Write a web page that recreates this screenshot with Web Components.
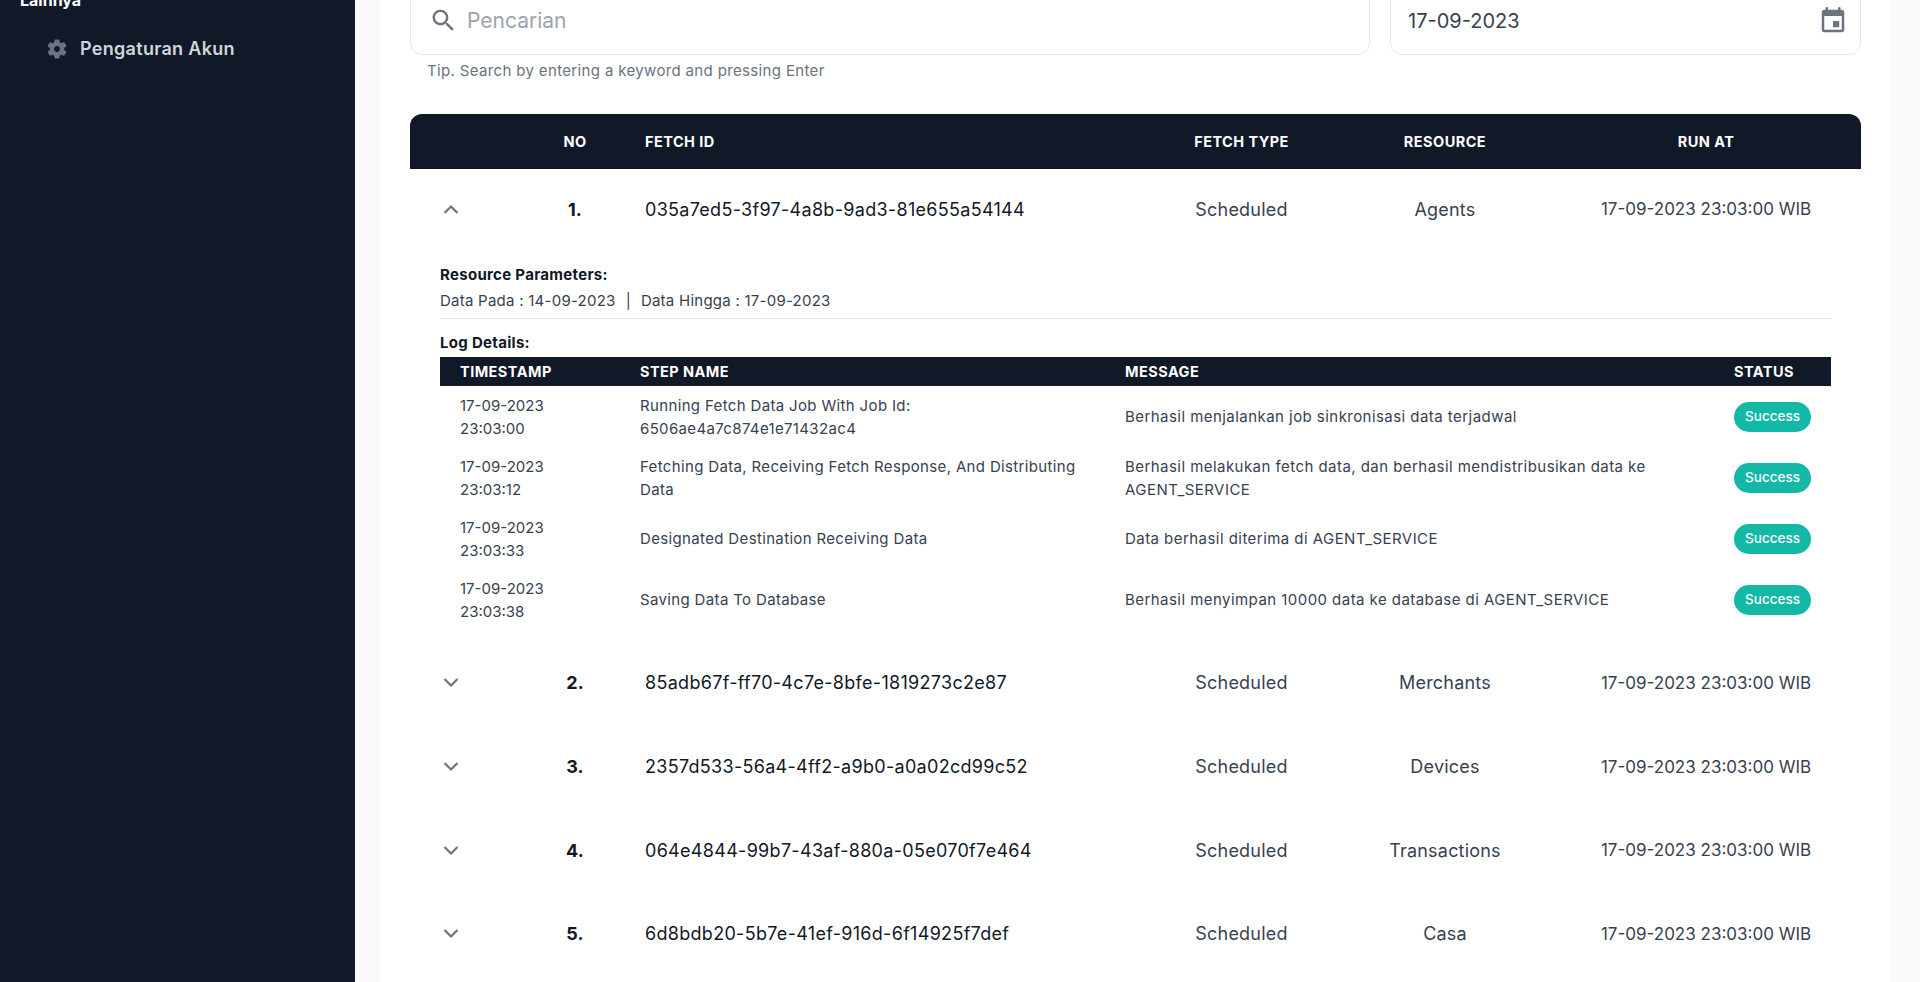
<!DOCTYPE html>
<html lang="id">
<head>
<meta charset="utf-8">
<title>Fetch Logs</title>
<style>
  html, body { margin: 0; height: 100%; overflow: hidden; background: #fafafa; }
  body { font-family: Inter, "Noto Sans", sans-serif; color: #374151; }
</style>
</head>
<body>
<app-shell>
  <side-bar slot="side">
    <nav-item>Pengaturan Akun</nav-item>
  </side-bar>
  <filter-bar></filter-bar>
  <fetch-table>
    <fetch-row no="1" fid="035a7ed5-3f97-4a8b-9ad3-81e655a54144" type="Scheduled" res="Agents" open>
      <log-row ts="17-09-2023 23:03:00" msg="Berhasil menjalankan job sinkronisasi data terjadwal">Running Fetch Data Job With Job Id:<br>6506ae4a7c874e1e71432ac4</log-row>
      <log-row ts="17-09-2023 23:03:12" msg="Berhasil melakukan fetch data, dan berhasil mendistribusikan data ke AGENT_SERVICE">Fetching Data, Receiving Fetch Response, And Distributing Data</log-row>
      <log-row ts="17-09-2023 23:03:33" msg="Data berhasil diterima di AGENT_SERVICE">Designated Destination Receiving Data</log-row>
      <log-row ts="17-09-2023 23:03:38" msg="Berhasil menyimpan 10000 data ke database di AGENT_SERVICE">Saving Data To Database</log-row>
    </fetch-row>
    <fetch-row no="2" fid="85adb67f-ff70-4c7e-8bfe-1819273c2e87" type="Scheduled" res="Merchants"></fetch-row>
    <fetch-row no="3" fid="2357d533-56a4-4ff2-a9b0-a0a02cd99c52" type="Scheduled" res="Devices"></fetch-row>
    <fetch-row no="4" fid="064e4844-99b7-43af-880a-05e070f7e464" type="Scheduled" res="Transactions"></fetch-row>
    <fetch-row no="5" fid="6d8bdb20-5b7e-41ef-916d-6f14925f7def" type="Scheduled" res="Casa"></fetch-row>
  </fetch-table>
</app-shell>

<script>
  // small helper so every element gets an open shadow root from its own template
  function shadow(el, html) {
    const template = document.createElement("template");
    template.innerHTML = html;
    el.attachShadow({ mode: "open" });
    el.shadowRoot.appendChild(template.content.cloneNode(true));
  }

  const MAIN_COLS = "95px 140px 500px 193px 214px 308px";
  const LOG_COLS = "180px 485px 609px 116px";

  class AppShell extends HTMLElement {
    constructor() {
      super();
      shadow(this, `
        <style>
          :host { display: flex; height: 982px; overflow: hidden; }
          .side { flex: 0 0 355px; }
          .panel {
            flex: 0 0 1511px; margin-left: 25px; background: #fff;
            padding: 0 30px; box-sizing: border-box;
          }
        </style>
        <div class="side"><slot name="side"></slot></div>
        <div class="panel"><slot></slot></div>
      `);
    }
  }

  class SideBar extends HTMLElement {
    constructor() {
      super();
      shadow(this, `
        <style>
          :host { display: block; height: 982px; background: #111827; padding: 0 20px; box-sizing: border-box; overflow: hidden; }
          .title { font-size: 16px; font-weight: 700; color: #fff; line-height: 20px; margin-top: -10px; }
          .items { margin-top: 27px; padding-left: 25px; }
        </style>
        <div class="title">Lainnya</div>
        <div class="items"><slot></slot></div>
      `);
    }
  }

  class NavItem extends HTMLElement {
    constructor() {
      super();
      shadow(this, `
        <style>
          :host { display: flex; align-items: center; gap: 11px; color: #d1d5db; font-size: 18px; letter-spacing: .3px; font-weight: 600; line-height: 24px; }
          svg { width: 24px; height: 24px; fill: #6b7280; flex: none; }
        </style>
        <svg viewBox="0 0 24 24"><path d="M19.14 12.94c.04-.3.06-.61.06-.94 0-.32-.02-.64-.07-.94l2.03-1.58c.18-.14.23-.41.12-.61l-1.92-3.32c-.12-.22-.37-.29-.59-.22l-2.39.96c-.5-.38-1.03-.7-1.62-.94l-.36-2.54c-.04-.24-.24-.41-.48-.41h-3.84c-.24 0-.43.17-.47.41l-.36 2.54c-.59.24-1.13.57-1.62.94l-2.39-.96c-.22-.08-.47 0-.59.22L2.74 8.87c-.12.21-.08.47.12.61l2.03 1.58c-.05.3-.09.63-.09.94s.02.64.07.94l-2.03 1.58c-.18.14-.23.41-.12.61l1.92 3.32c.12.22.37.29.59.22l2.39-.96c.5.38 1.03.7 1.62.94l.36 2.54c.05.24.24.41.48.41h3.84c.24 0 .44-.17.47-.41l.36-2.54c.59-.24 1.13-.56 1.62-.94l2.39.96c.22.08.47 0 .59-.22l1.92-3.32c.12-.22.07-.47-.12-.61l-2.01-1.58zM12 15c-1.65 0-3-1.35-3-3s1.35-3 3-3 3 1.35 3 3-1.35 3-3 3z"/></svg>
        <span><slot></slot></span>
      `);
    }
  }

  class FilterBar extends HTMLElement {
    constructor() {
      super();
      shadow(this, `
        <style>
          :host { display: block; margin-top: -14px; }
          .row { display: flex; gap: 20px; }
          .field {
            height: 69px; box-sizing: border-box; background: #fff;
            border: 1px solid #e5e7eb; border-radius: 12px;
            display: flex; align-items: center; font-size: 20px;
          }
          .search { flex: 0 0 960px; padding-left: 18px; color: #9ca3af; gap: 9px; font-size: 21px; }
          .date { flex: 1; padding: 0 12px 0 17px; justify-content: space-between; color: #374151; }
          svg { width: 29px; height: 29px; fill: #6b7280; flex: none; }
          .date svg { width: 30px; height: 30px; }
          .tip { font-size: 15px; letter-spacing: .35px; color: #6b7280; margin: 6px 0 0 17px; line-height: 20px; }
        </style>
        <div class="row">
          <div class="field search">
            <svg viewBox="0 0 24 24"><path d="M15.5 14h-.79l-.28-.27C15.41 12.59 16 11.11 16 9.5 16 5.91 13.09 3 9.5 3S3 5.91 3 9.5 5.91 16 9.5 16c1.61 0 3.09-.59 4.23-1.57l.27.28v.79l5 4.99L20.49 19l-4.99-5zm-6 0C7.01 14 5 11.99 5 9.5S7.01 5 9.5 5 14 7.01 14 9.5 11.99 14 9.5 14z"/></svg>
            <span>Pencarian</span>
          </div>
          <div class="field date">
            <span>17-09-2023</span>
            <svg viewBox="0 0 24 24"><path d="M17 12h-5v5h5v-5zM16 1v2H8V1H6v2H5c-1.11 0-1.99.9-1.99 2L3 19c0 1.1.89 2 2 2h14c1.1 0 2-.9 2-2V5c0-1.1-.9-2-2-2h-1V1h-2zm3 18H5V8h14v11z"/></svg>
          </div>
        </div>
        <div class="tip">Tip. Search by entering a keyword and pressing Enter</div>
      `);
    }
  }

  class FetchTable extends HTMLElement {
    constructor() {
      super();
      shadow(this, `
        <style>
          :host { display: block; margin-top: 33px; }
          .head {
            display: grid; grid-template-columns: ${MAIN_COLS}; align-items: center;
            height: 55px; background: #111827; color: #fff;
            border-radius: 12px 12px 0 0;
            font-size: 14.5px; letter-spacing: .45px; font-weight: 700; text-transform: uppercase;
          }
          .c { text-align: center; }
        </style>
        <div class="head">
          <span></span><span class="c">No</span><span>Fetch Id</span>
          <span class="c">Fetch Type</span><span class="c">Resource</span><span class="c">Run At</span>
        </div>
        <slot></slot>
      `);
    }
  }

  class FetchRow extends HTMLElement {
    constructor() {
      super();
      const open = this.hasAttribute("open");
      const chevron = open ? "1.5,9 8,2.5 14.5,9" : "1.5,2 8,8.5 14.5,2";
      shadow(this, `
        <style>
          :host { display: block; }
          .row {
            display: grid; grid-template-columns: ${MAIN_COLS}; align-items: center;
            height: ${open ? "80px" : "83.7px"}; font-size: 18px; letter-spacing: .2px; color: #374151;
          }
          .chev { display: flex; justify-content: center; padding-left: 1px; padding-right: 14px; }
          svg { width: 16px; height: 11px; fill: none; stroke: #6b7280; stroke-width: 2.2; }
          .no { text-align: center; font-weight: 700; color: #111827; }
          .id { color: #111827; letter-spacing: .3px; }
          .c { text-align: center; }
          .run { text-align: center; font-size: 17px; letter-spacing: 0; }
          .detail { display: ${open ? "block" : "none"}; padding: 15px 30px 11px; font-size: 15px; }
          .label { font-weight: 700; color: #111827; line-height: 22px; letter-spacing: .3px; }
          .params { line-height: 22px; margin-top: 4px; padding-bottom: 6px; border-bottom: 1px solid #e5e7eb; letter-spacing: .25px; }
          .sep { margin: 0 10px; color: #374151; }
          .logs { margin-top: 13px; }
          .log-head {
            display: grid; grid-template-columns: ${LOG_COLS}; align-items: center;
            height: 29px; margin-top: 3px; background: #111827; color: #fff;
            font-size: 14.5px; letter-spacing: .45px; font-weight: 700; text-transform: uppercase;
          }
          .log-head span { padding-left: 20px; }
        </style>
        <div class="row">
          <div class="chev"><svg viewBox="0 0 16 11"><polyline points="${chevron}"/></svg></div>
          <div class="no">${this.getAttribute("no")}.</div>
          <div class="id">${this.getAttribute("fid")}</div>
          <div class="c">${this.getAttribute("type")}</div>
          <div class="c">${this.getAttribute("res")}</div>
          <div class="run">17-09-2023 23:03:00 WIB</div>
        </div>
        <div class="detail">
          <div class="label">Resource Parameters:</div>
          <div class="params">Data Pada : 14-09-2023<span class="sep">|</span>Data Hingga : 17-09-2023</div>
          <div class="logs">
            <div class="label">Log Details:</div>
            <div class="log-head"><span>Timestamp</span><span>Step Name</span><span>Message</span><span>Status</span></div>
            <slot></slot>
          </div>
        </div>
      `);
    }
  }

  class LogRow extends HTMLElement {
    constructor() {
      super();
      shadow(this, `
        <style>
          :host { display: grid; grid-template-columns: ${LOG_COLS}; align-items: center; height: 61px; font-size: 15px; line-height: 23px; color: #374151; }
          div { padding-left: 20px; }
          .ts { padding-right: 50px; }
          .step { padding-right: 20px; letter-spacing: .35px; }
          .msg { padding-right: 50px; letter-spacing: .45px; }
        </style>
        <div class="ts">${this.getAttribute("ts")}</div>
        <div class="step"><slot></slot></div>
        <div class="msg">${this.getAttribute("msg")}</div>
        <div><status-badge>Success</status-badge></div>
      `);
    }
  }

  class StatusBadge extends HTMLElement {
    constructor() {
      super();
      shadow(this, `
        <style>
          :host {
            display: inline-flex; align-items: center; justify-content: center;
            width: 77px; height: 30px; border-radius: 15px;
            background: #14b8a6; color: #fff; font-size: 13.5px; font-weight: 500;
            letter-spacing: 0;
          }
        </style>
        <slot></slot>
      `);
    }
  }

  customElements.define("app-shell", AppShell);
  customElements.define("side-bar", SideBar);
  customElements.define("nav-item", NavItem);
  customElements.define("filter-bar", FilterBar);
  customElements.define("fetch-table", FetchTable);
  customElements.define("fetch-row", FetchRow);
  customElements.define("log-row", LogRow);
  customElements.define("status-badge", StatusBadge);
</script>
</body>
</html>
